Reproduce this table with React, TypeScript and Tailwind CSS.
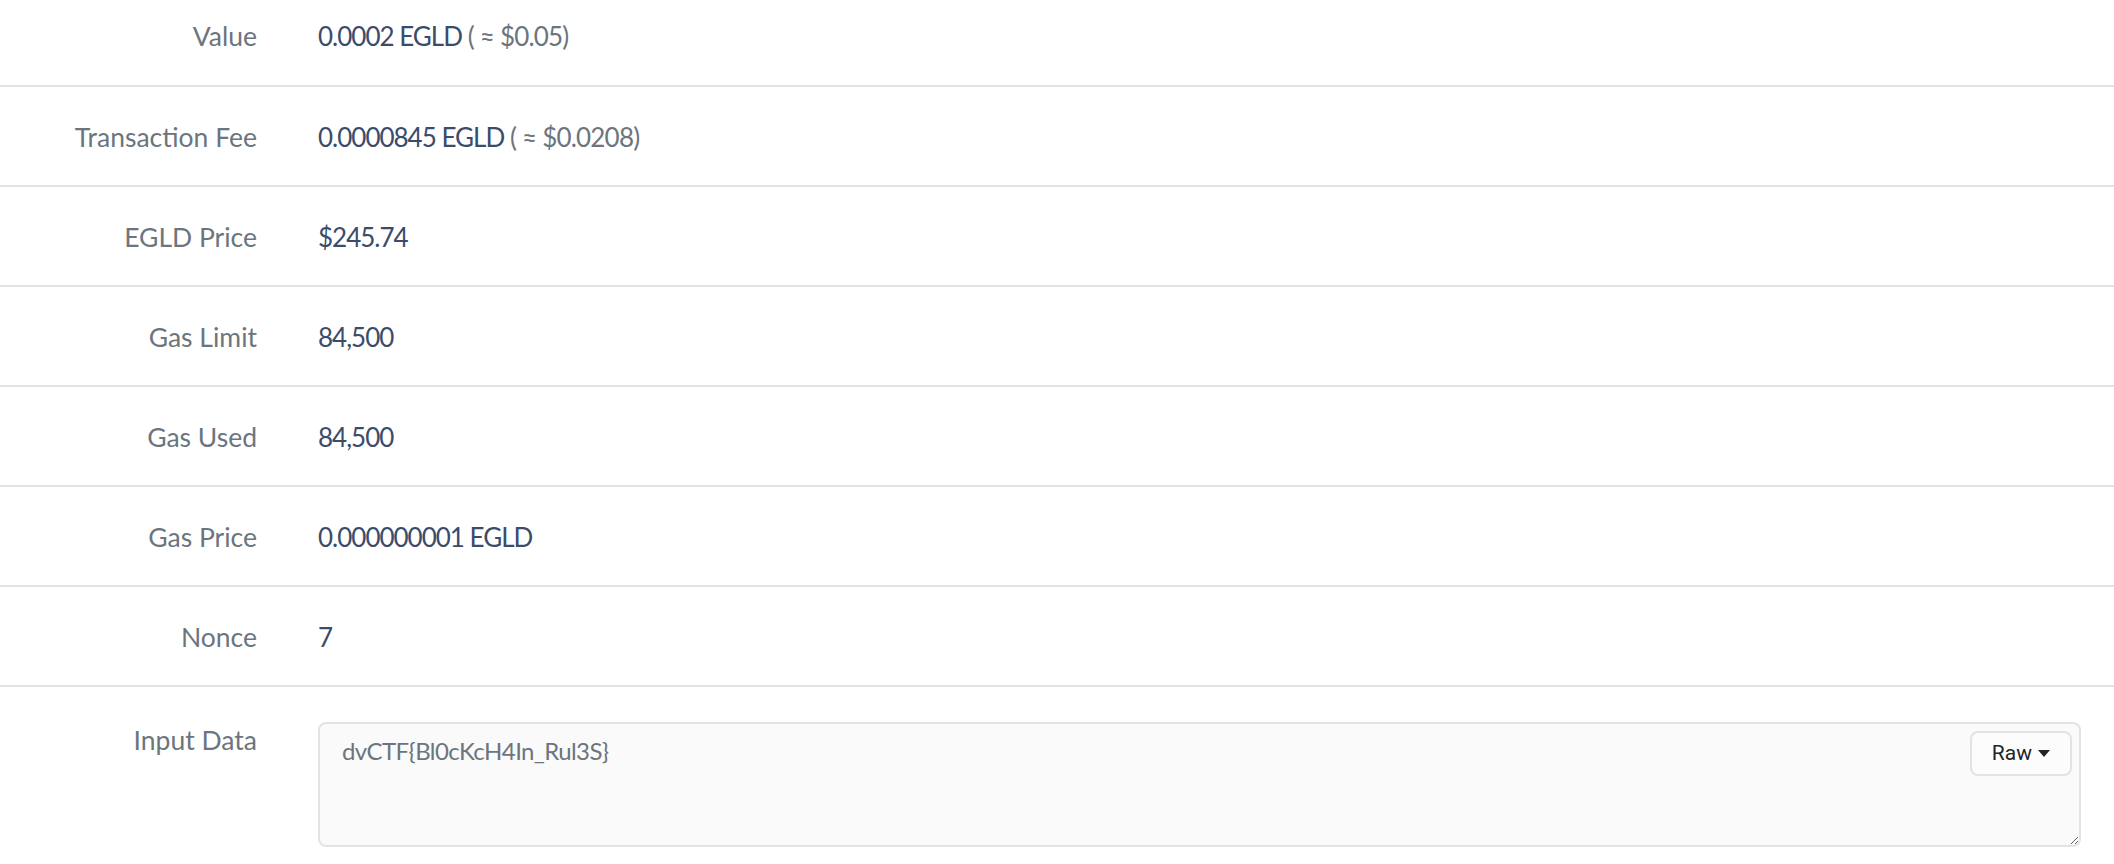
const rows: { label: string; value: string; note?: string }[] = [
  { label: "Value", value: "0.0002 EGLD", note: "( ≈ $0.05)" },
  { label: "Transaction Fee", value: "0.0000845 EGLD", note: "( ≈ $0.0208)" },
  { label: "EGLD Price", value: "$245.74" },
  { label: "Gas Limit", value: "84,500" },
  { label: "Gas Used", value: "84,500" },
  { label: "Gas Price", value: "0.000000001 EGLD" },
  { label: "Nonce", value: "7" },
];

const font = { fontFamily: '"Source Sans Pro", Lato, "Noto Sans", sans-serif' };

export default function App() {
  return (
    <div className="h-[864px] overflow-hidden bg-white" style={font}>
      <div className="-mt-[15px]">
        {rows.map((r, i) => (
          <div
            key={r.label}
            className={`flex items-center h-[100px] pt-[3px] ${i > 0 ? "border-t-2 border-[#e3e3e3]" : ""}`}
          >
            <div className="w-[257px] shrink-0 text-right text-[26.5px] text-[#6c757d]">{r.label}</div>
            <div className="ml-[61px] text-[26px] tracking-[-1px] text-[#3b4c6b]">
              {r.value}
              {r.note && (
                <span className="text-[#6c757d] tracking-[-0.8px]">
                  {" "}
                  {r.note}
                </span>
              )}
            </div>
          </div>
        ))}

        {/* Input data */}
        <div className="flex border-t-2 border-[#e3e3e3] pt-[35px] pb-[20px]">
          <div className="w-[257px] shrink-0 text-right text-[26.5px] text-[#6c757d] leading-[36px]">Input Data</div>
          <div className="relative ml-[61px] mr-[33px] flex-1">
            <textarea
              readOnly
              value="dvCTF{Bl0cKcH4In_Rul3S}"
              className="block w-full h-[125px] rounded-[8px] border-2 border-[#e3e3e3] bg-[#fafafa] px-[22px] pt-[9px] text-[24px] tracking-[-0.6px] text-[#6c757d] outline-none"
            />
            <button
              className="absolute right-[9px] top-[9px] flex items-center gap-[6px] h-[45px] px-[20px] rounded-[8px] border-2 border-[#e3e3e3] bg-[#fcfcfc] text-[21px] text-[#212529]"
              style={{ fontFamily: 'Roboto, "Liberation Sans", sans-serif' }}
            >
              Raw
              <span className="w-0 h-0 border-l-[6px] border-r-[6px] border-t-[7px] border-l-transparent border-r-transparent border-t-[#212529]" />
            </button>
          </div>
        </div>
      </div>
    </div>
  );
}
